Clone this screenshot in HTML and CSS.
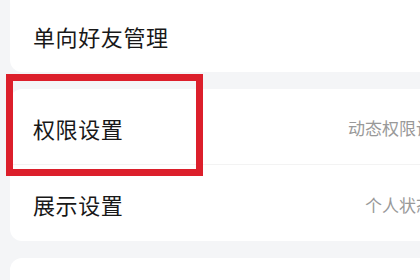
FILE: index.html
```html
<!DOCTYPE html>
<html lang="zh">
<head>
<meta charset="utf-8">
<link rel="stylesheet" href="styles.css">
</head>
<body>
<div class="page">
  <div class="card card-top">
    <div class="row"><span class="title">单向好友管理</span></div>
  </div>
  <div class="card">
    <div class="row row-divided"><span class="title">权限设置</span><span class="value">动态权限设置</span></div>
    <div class="row"><span class="title">展示设置</span><span class="value">个人状态等</span></div>
  </div>
  <div class="card card-last">
    <div class="row"><span class="title"></span></div>
  </div>
  <div class="highlight"></div>
</div>
</body>
</html>
```
FILE: styles.css
```css
html, body {
  margin: 0;
  padding: 0;
  width: 420px;
  height: 280px;
  overflow: hidden;
  background: #f4f5f7;
  font-family: "Noto Sans CJK SC", "Noto Sans", sans-serif;
}
.page {
  position: relative;
  display: flex;
  flex-direction: column;
  gap: 17px;
  padding-left: 10px;
  width: 500px;
}
.card {
  background: #ffffff;
  border-radius: 12px;
  display: flex;
  flex-direction: column;
}
.card-top {
  margin-top: -12px;
  padding-top: 12px;
}
.row {
  height: 76px;
  display: flex;
  align-items: center;
  justify-content: space-between;
  padding: 2px 60px 0 23px;
  box-sizing: border-box;
}
.card-top .row {
  height: 72px;
  padding-top: 0;
}
.row-divided {
  border-bottom: 1px solid #f3f3f3;
}
.title {
  font-size: 22px;
  color: #181818;
  letter-spacing: 0.6px;
}
.value {
  font-size: 17px;
  color: #999999;
}
.highlight {
  position: absolute;
  left: 6px;
  top: 74px;
  width: 197px;
  height: 102px;
  border: 7px solid #dc1f2b;
  box-sizing: border-box;
}
```
